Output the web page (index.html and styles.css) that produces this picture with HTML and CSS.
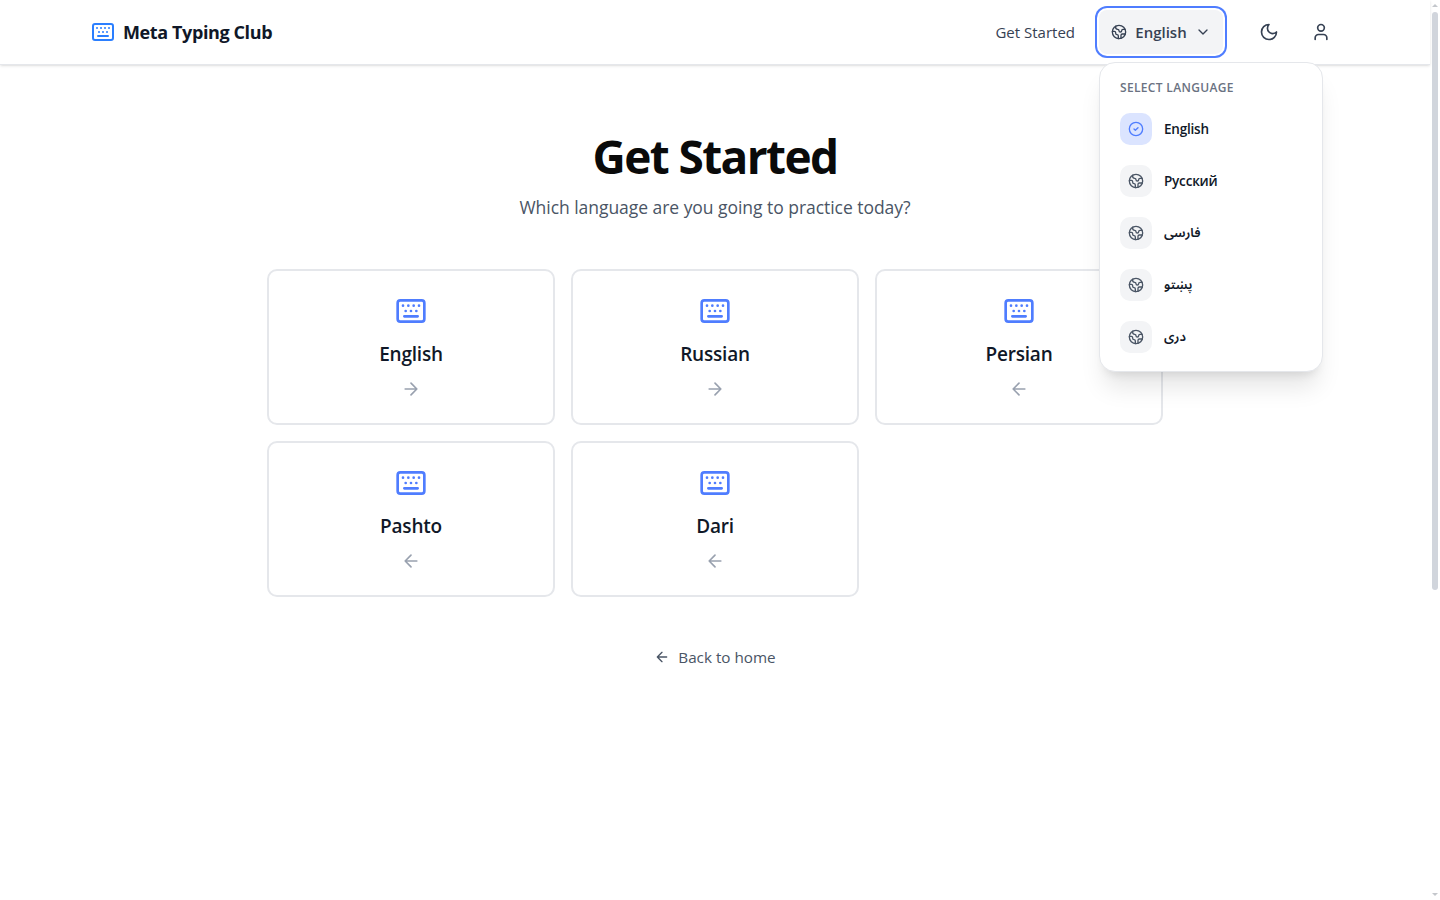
FILE: index.html
```html
<!DOCTYPE html>
<html lang="en">
<head>
    <meta charset="UTF-8">
    <meta name="viewport" content="width=device-width, initial-scale=1.0">
    <title>Meta Typing Club</title>
    <link rel="stylesheet" href="styles.css">
</head>
<body>
    <svg class="sprite" aria-hidden="true">
        <symbol id="keyboard" viewBox="0 0 24 24">
            <rect x="2" y="4" width="20" height="16" rx="2"/>
            <path d="M6 8h.01M10 8h.01M14 8h.01M18 8h.01M8 12h.01M12 12h.01M16 12h.01M7 16h10"/>
        </symbol>
        <symbol id="earth" viewBox="0 0 24 24">
            <path d="M21.54 15H17a2 2 0 0 0-2 2v4.54"/>
            <path d="M7 3.34V5a3 3 0 0 0 3 3a2 2 0 0 1 2 2c0 1.1.9 2 2 2a2 2 0 0 0 2-2c0-1.1.9-2 2-2h3.17"/>
            <path d="M11 21.95V18a2 2 0 0 0-2-2a2 2 0 0 1-2-2v-1a2 2 0 0 0-2-2H2.05"/>
            <circle cx="12" cy="12" r="10"/>
        </symbol>
        <symbol id="arrow-right" viewBox="0 0 24 24"><path d="M5 12h14M12 5l7 7-7 7"/></symbol>
        <symbol id="arrow-left" viewBox="0 0 24 24"><path d="M12 19l-7-7 7-7M19 12H5"/></symbol>
    </svg>

    <header class="header">
        <div class="header-inner">
            <a class="brand" href="#">
                <svg class="icon icon-24"><use href="#keyboard"/></svg>
                <span class="brand-name">Meta Typing Club</span>
            </a>
            <nav class="nav">
                <a class="nav-link" href="#">Get Started</a>
                <div class="lang">
                    <button class="lang-button" type="button">
                        <svg class="icon icon-16"><use href="#earth"/></svg>
                        <span class="lang-current">English</span>
                        <svg class="icon icon-16" viewBox="0 0 24 24"><path d="m6 9 6 6 6-6"/></svg>
                    </button>
                    <div class="lang-menu">
                        <p class="menu-title">Select Language</p>
                        <ul class="menu-list">
                            <li class="menu-item active">
                                <span class="menu-icon"><svg class="icon icon-16" viewBox="0 0 24 24"><circle cx="12" cy="12" r="10"/><path d="m9 12 2 2 4-4"/></svg></span>
                                <span class="menu-text">English</span>
                            </li>
                            <li class="menu-item">
                                <span class="menu-icon"><svg class="icon icon-16"><use href="#earth"/></svg></span>
                                <span class="menu-text">Русский</span>
                            </li>
                            <li class="menu-item">
                                <span class="menu-icon"><svg class="icon icon-16"><use href="#earth"/></svg></span>
                                <span class="menu-text arabic" lang="fa">فارسی</span>
                            </li>
                            <li class="menu-item">
                                <span class="menu-icon"><svg class="icon icon-16"><use href="#earth"/></svg></span>
                                <span class="menu-text arabic" lang="ps">پښتو</span>
                            </li>
                            <li class="menu-item">
                                <span class="menu-icon"><svg class="icon icon-16"><use href="#earth"/></svg></span>
                                <span class="menu-text arabic" lang="fa">دری</span>
                            </li>
                        </ul>
                    </div>
                </div>
                <button class="icon-button" type="button" aria-label="Theme">
                    <svg class="icon icon-20" viewBox="0 0 24 24"><path d="M12 3a6 6 0 0 0 9 9 9 9 0 1 1-9-9Z"/></svg>
                </button>
                <button class="icon-button" type="button" aria-label="Account">
                    <svg class="icon icon-20" viewBox="0 0 24 24"><path d="M19 21v-2a4 4 0 0 0-4-4H9a4 4 0 0 0-4 4v2"/><circle cx="12" cy="7" r="4"/></svg>
                </button>
            </nav>
        </div>
    </header>

    <main class="main">
        <h1 class="title">Get Started</h1>
        <p class="subtitle">Which language are you going to practice today?</p>
        <div class="grid">
            <a class="card" href="#">
                <svg class="icon icon-32"><use href="#keyboard"/></svg>
                <span class="card-name">English</span>
                <svg class="icon icon-20 card-arrow"><use href="#arrow-right"/></svg>
            </a>
            <a class="card" href="#">
                <svg class="icon icon-32"><use href="#keyboard"/></svg>
                <span class="card-name">Russian</span>
                <svg class="icon icon-20 card-arrow"><use href="#arrow-right"/></svg>
            </a>
            <a class="card" href="#">
                <svg class="icon icon-32"><use href="#keyboard"/></svg>
                <span class="card-name">Persian</span>
                <svg class="icon icon-20 card-arrow"><use href="#arrow-left"/></svg>
            </a>
            <a class="card" href="#">
                <svg class="icon icon-32"><use href="#keyboard"/></svg>
                <span class="card-name">Pashto</span>
                <svg class="icon icon-20 card-arrow"><use href="#arrow-left"/></svg>
            </a>
            <a class="card" href="#">
                <svg class="icon icon-32"><use href="#keyboard"/></svg>
                <span class="card-name">Dari</span>
                <svg class="icon icon-20 card-arrow"><use href="#arrow-left"/></svg>
            </a>
        </div>
        <a class="back" href="#">
            <svg class="icon icon-16"><use href="#arrow-left"/></svg>
            <span class="back-text">Back to home</span>
        </a>
    </main>

    <div class="scrollbar">
        <span class="scroll-up"></span>
        <span class="scroll-thumb"></span>
        <span class="scroll-down"></span>
    </div>
</body>
</html>
```
FILE: styles.css
```css
* {
    box-sizing: border-box;
}
body {
    margin: 0;
    padding-right: 10px;
    height: 900px;
    overflow: hidden;
    background-color: #fff;
    color: #0a0a0a;
    font-family: "Segoe UI", "Open Sans", "Noto Sans", "DejaVu Sans", sans-serif;
    font-size: 16px;
    line-height: 24px;
    white-space: nowrap;
}
a {
    color: inherit;
    text-decoration: none;
}
button {
    border: 0;
    padding: 0;
    background: none;
    font: inherit;
    color: inherit;
}
h1, p, ul {
    margin: 0;
    padding: 0;
}
.sprite {
    display: none;
}
.icon {
    flex: none;
    fill: none;
    stroke: currentColor;
    stroke-width: 2;
    stroke-linecap: round;
    stroke-linejoin: round;
}
.icon-16 {
    width: 16px;
    height: 16px;
}
.icon-20 {
    width: 20px;
    height: 20px;
}
.icon-24 {
    width: 24px;
    height: 24px;
}
.icon-32 {
    width: 32px;
    height: 32px;
}

/* header */
.header {
    height: 65px;
    border-bottom: 1px solid #e5e7eb;
    box-shadow: 0 1px 3px rgba(0,0,0,0.1), 0 1px 2px -1px rgba(0,0,0,0.1);
}
.header-inner {
    display: flex;
    align-items: center;
    justify-content: space-between;
    max-width: 1280px;
    height: 64px;
    margin: 0 auto;
    padding: 0 16px;
}
.brand {
    display: flex;
    align-items: center;
    gap: 8px;
    color: #2b7fff;
}
.brand-name {
    color: #101828;
    font-size: 18px;
    font-weight: 700;
    letter-spacing: -0.39px;
}
.nav {
    display: flex;
    align-items: center;
    color: #364153;
}
.nav-link {
    margin-right: 24px;
    font-size: 15px;
}
.lang {
    position: relative;
    margin-right: 28px;
}
.lang-button {
    display: flex;
    align-items: center;
    justify-content: center;
    gap: 8px;
    width: 124px;
    height: 44px;
    border-radius: 8px;
    background-color: #f3f4f6;
    box-shadow: 0 0 0 2px #fff, 0 0 0 4px #4f7dff;
}
.lang-current {
    font-size: 15px;
    font-weight: 600;
}
.icon-button {
    display: flex;
    align-items: center;
    justify-content: center;
    width: 36px;
    height: 36px;
}
.icon-button + .icon-button {
    margin-left: 16px;
}

/* language menu */
.lang-menu {
    position: absolute;
    top: 52px;
    left: 0;
    z-index: 10;
    width: 224px;
    height: 310px;
    padding: 17px 20px;
    border: 1px solid #e5e7eb;
    border-radius: 16px;
    background-color: #fff;
    box-shadow: 0 20px 25px -5px rgba(0,0,0,0.1), 0 8px 10px -6px rgba(0,0,0,0.1);
}
.menu-title {
    color: #6a7282;
    font-size: 12px;
    font-weight: 600;
    line-height: 16px;
    letter-spacing: 0.33px;
    text-transform: uppercase;
}
.menu-list {
    display: grid;
    gap: 20px;
    margin-top: 17px;
    list-style: none;
}
.menu-item {
    display: flex;
    align-items: center;
    gap: 12px;
    height: 32px;
    color: #4a5565;
}
.menu-icon {
    display: flex;
    align-items: center;
    justify-content: center;
    width: 32px;
    height: 32px;
    border-radius: 10px;
    background-color: #f3f4f6;
}
.active .menu-icon {
    background-color: #dbe4ff;
    color: #4f7dff;
}
.menu-text {
    color: #101828;
    font-size: 13.5px;
    font-weight: 600;
    line-height: 20px;
    letter-spacing: -0.2px;
}
.arabic {
    font-family: "Segoe UI", "Noto Sans Arabic", "DejaVu Sans", sans-serif;
    font-size: 13px;
    letter-spacing: 0;
}

/* page */
.main {
    display: flex;
    flex-direction: column;
    align-items: center;
    padding-top: 63px;
}
.title {
    font-size: 46px;
    font-weight: 700;
    line-height: 56px;
    letter-spacing: -1.6px;
}
.subtitle {
    margin-top: 9px;
    color: #4a5565;
    font-size: 17.5px;
    line-height: 28px;
    letter-spacing: -0.04px;
}
.grid {
    display: grid;
    grid-template-columns: repeat(3, 288px);
    gap: 16px;
    margin-top: 48px;
}
.card {
    display: flex;
    flex-direction: column;
    align-items: center;
    height: 156px;
    padding-top: 24px;
    border: 2px solid #e5e7eb;
    border-radius: 10px;
    color: #4f7dff;
}
.card-name {
    margin-top: 13px;
    color: #101828;
    font-size: 19px;
    font-weight: 600;
    line-height: 28px;
    letter-spacing: -0.2px;
}
.card-arrow {
    margin-top: 11px;
    color: #99a1af;
}
.back {
    display: flex;
    align-items: center;
    gap: 8px;
    margin-top: 48px;
    color: #4a5565;
    font-size: 15.25px;
}

/* scrollbar */
.scrollbar {
    position: fixed;
    top: 0;
    right: 0;
    display: flex;
    flex-direction: column;
    align-items: center;
    width: 10px;
    height: 900px;
    padding: 4px 0;
}
.scroll-up, .scroll-down {
    border: 3px solid transparent;
}
.scroll-up {
    border-top: 0;
    border-bottom-color: #c4c7cc;
}
.scroll-down {
    margin-top: auto;
    border-bottom: 0;
    border-top-color: #c4c7cc;
}
.scroll-thumb {
    width: 6px;
    height: 578px;
    margin-top: 5px;
    border-radius: 3px;
    background-color: #d1d5dc;
}
```
